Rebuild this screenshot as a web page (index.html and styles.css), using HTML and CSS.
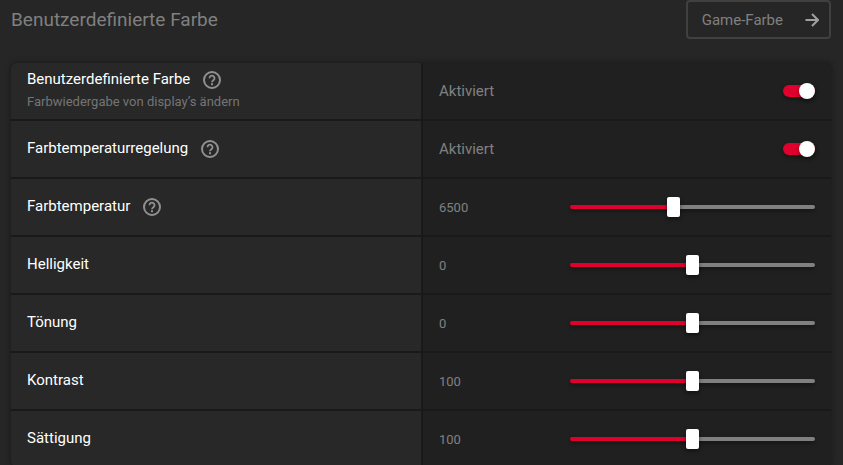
FILE: index.html
```
<!DOCTYPE html>
<html lang="de">
<head>
    <meta charset="UTF-8">
    <meta name="viewport" content="width=device-width, initial-scale=1.0">
    <title>Benutzerdefinierte Farbe</title>
    <link rel="stylesheet" href="styles.css">
</head>
<body>
    <svg class="sprite" aria-hidden="true">
        <symbol id="icon-help" viewBox="0 0 18 18">
            <circle cx="9" cy="9" r="8" fill="none" stroke="currentColor" stroke-width="2"/>
            <path d="M6.500 7.200a2.500 2.500 0 1 1 4.300 1.700C10 9.700 9 10 9 11.200" fill="none" stroke="currentColor" stroke-width="1.8"/>
            <rect x="8" y="12.200" width="2" height="2" fill="currentColor"/>
        </symbol>
    </svg>

    <header class="header">
        <h1 class="title">Benutzerdefinierte Farbe</h1>
        <button type="button" class="game-button">
            Game-Farbe
            <svg class="arrow" viewBox="0 0 14 14" aria-hidden="true">
                <path d="M0.500 7h12M7 1l6 6-6 6" fill="none" stroke="currentColor" stroke-width="2"/>
            </svg>
        </button>
    </header>

    <main class="panel">
        <div class="row">
            <div class="name">
                <div class="name-line">
                    <label for="custom-color">Benutzerdefinierte Farbe</label>
                    <button type="button" class="help" aria-label="Hilfe"><svg><use href="#icon-help"/></svg></button>
                </div>
                <p class="hint">Farbwiedergabe von display’s ändern</p>
            </div>
            <div class="control">
                <span class="state">Aktiviert</span>
                <input type="checkbox" class="toggle" id="custom-color" checked>
            </div>
        </div>

        <div class="row">
            <div class="name">
                <div class="name-line">
                    <label for="temp-control">Farbtemperaturregelung</label>
                    <button type="button" class="help" aria-label="Hilfe"><svg><use href="#icon-help"/></svg></button>
                </div>
            </div>
            <div class="control">
                <span class="state">Aktiviert</span>
                <input type="checkbox" class="toggle" id="temp-control" checked>
            </div>
        </div>

        <div class="row">
            <div class="name">
                <div class="name-line">
                    <label for="temperature">Farbtemperatur</label>
                    <button type="button" class="help" aria-label="Hilfe"><svg><use href="#icon-help"/></svg></button>
                </div>
            </div>
            <div class="control">
                <output class="value" for="temperature">6500</output>
                <input type="range" class="slider" id="temperature" min="4000" max="10000" step="100" value="6500" style="--fill: 42%">
            </div>
        </div>

        <div class="row">
            <div class="name">
                <div class="name-line"><label for="brightness">Helligkeit</label></div>
            </div>
            <div class="control">
                <output class="value" for="brightness">0</output>
                <input type="range" class="slider" id="brightness" min="-100" max="100" value="0" style="--fill: 50%">
            </div>
        </div>

        <div class="row">
            <div class="name">
                <div class="name-line"><label for="hue">Tönung</label></div>
            </div>
            <div class="control">
                <output class="value" for="hue">0</output>
                <input type="range" class="slider" id="hue" min="-30" max="30" value="0" style="--fill: 50%">
            </div>
        </div>

        <div class="row">
            <div class="name">
                <div class="name-line"><label for="contrast">Kontrast</label></div>
            </div>
            <div class="control">
                <output class="value" for="contrast">100</output>
                <input type="range" class="slider" id="contrast" min="0" max="200" value="100" style="--fill: 50%">
            </div>
        </div>

        <div class="row">
            <div class="name">
                <div class="name-line"><label for="saturation">Sättigung</label></div>
            </div>
            <div class="control">
                <output class="value" for="saturation">100</output>
                <input type="range" class="slider" id="saturation" min="0" max="200" value="100" style="--fill: 50%">
            </div>
        </div>
    </main>

    <script>
        // keep the red part of the track and the number in step with the thumb
        document.querySelectorAll(".slider").forEach(function (slider) {
            slider.addEventListener("input", function () {
                const percent = (slider.value - slider.min) / (slider.max - slider.min) * 100;
                slider.style.setProperty("--fill", percent + "%");
                slider.previousElementSibling.value = slider.value;
            });
        });
    </script>
</body>
</html>
```
FILE: styles.css
```
* {
    box-sizing: border-box;
    margin: 0;
    padding: 0;
}

body {
    height: 100vh;
    overflow: hidden;
    padding: 0 12px 0 11px;
    background-color: #262626;
    color: #808080;
    font-family: Roboto, "Liberation Sans", sans-serif;
    font-size: 15px;
}

.sprite {
    display: none;
}

.header {
    display: flex;
    align-items: center;
    justify-content: space-between;
    margin-bottom: 24px;
}

.title {
    font-size: 19px;
    font-weight: normal;
}

.game-button {
    display: flex;
    align-items: center;
    gap: 22px;
    height: 39px;
    padding: 0 10px 0 14px;
    border: 2px solid #404040;
    border-radius: 4px;
    background: transparent;
    color: #808080;
    font: inherit;
}

.arrow {
    width: 14px;
    height: 14px;
    color: #a0a0a0;
}

.panel {
    display: grid;
    gap: 2px;
    border-radius: 6px;
    overflow: hidden;
    background-color: #191919;
    box-shadow: 0 0 6px rgba(0, 0, 0, 0.4);
}

.row {
    display: grid;
    grid-template-columns: 50% 1fr;
    gap: 2px;
    min-height: 56px;
}

.name {
    display: flex;
    flex-direction: column;
    justify-content: center;
    gap: 2px;
    padding: 0 16px;
    background-color: #282828;
}

.name-line {
    display: flex;
    align-items: center;
    gap: 13px;
    color: #fff;
    line-height: 18px;
}

.name-line label {
    padding-bottom: 2px;
}

.help {
    width: 18px;
    height: 18px;
    border: none;
    background: transparent;
    color: #909090;
}

.help svg {
    display: block;
    width: 18px;
    height: 18px;
}

.hint {
    font-size: 13px;
    line-height: 20px;
    color: #757575;
}

.control {
    display: flex;
    align-items: center;
    justify-content: space-between;
    padding: 0 16px;
    background-color: #202020;
}

.control .value {
    flex: 0 0 131px;
    font-size: 13px;
}

.toggle {
    appearance: none;
    display: flex;
    align-items: center;
    width: 32px;
    height: 12px;
    border-radius: 6px;
    background-color: #808080;
    box-shadow: 0 2px 4px rgba(0, 0, 0, 0.4);
}

.toggle::before {
    content: "";
    flex: none;
    width: 16px;
    height: 16px;
    border-radius: 50%;
    background-color: #fff;
    box-shadow: 0 2px 4px rgba(0, 0, 0, 0.4);
}

.toggle:checked {
    justify-content: flex-end;
    background-color: #e0002d;
}

.slider {
    appearance: none;
    flex: 1;
    min-width: 0;
    height: 4px;
    border-radius: 2px;
    background: linear-gradient(to right, #e0002d var(--fill), #808080 var(--fill));
    box-shadow: 0 2px 4px rgba(0, 0, 0, 0.4);
}

.slider::-webkit-slider-thumb {
    appearance: none;
    width: 13px;
    height: 20px;
    border-radius: 2px;
    background-color: #fff;
    box-shadow: 0 2px 4px rgba(0, 0, 0, 0.5);
}

.slider::-moz-range-thumb {
    width: 13px;
    height: 20px;
    border: none;
    border-radius: 2px;
    background-color: #fff;
}
```
